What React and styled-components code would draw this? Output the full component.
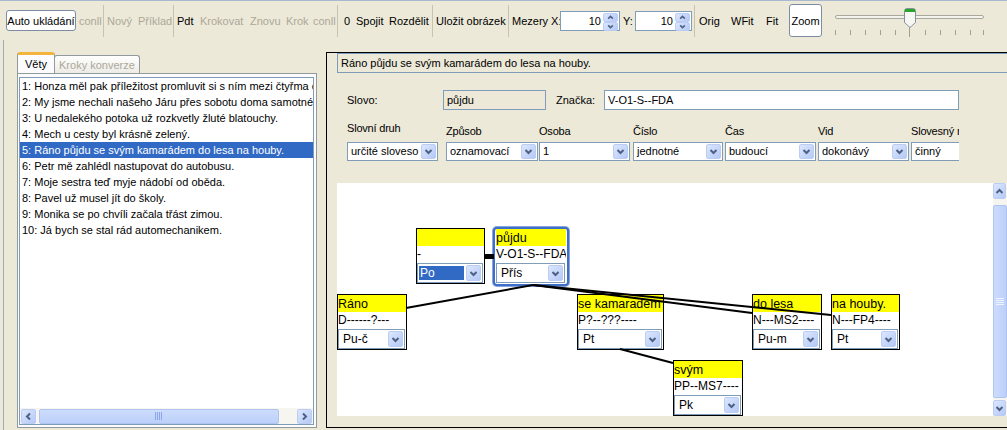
import React from "react";
import styled, { createGlobalStyle } from "styled-components";

const GlobalStyle = createGlobalStyle`
  html, body {
    margin: 0;
    padding: 0;
  }
  body {
    background: #ece9d8;
    font-family: "Liberation Sans", Arial, sans-serif;
    font-size: 11px;
    color: #000;
    overflow: hidden;
  }
`;

const Window = styled.div`
  width: 1007px;
  height: 430px;
  display: flex;
  flex-direction: column;
  overflow: hidden;
  border-top: 1px solid #a9b8cf;
  box-sizing: border-box;
`;

/* ---------- toolbar ---------- */

const Toolbar = styled.div`
  height: 39px;
  display: flex;
  align-items: center;
  flex-shrink: 0;
`;

const ToolLabel = styled.div`
  width: ${(p) => p.$w}px;
  margin-left: ${(p) => p.$ml}px;
  color: ${(p) => (p.$off ? "#aca899" : "#000")};
  white-space: nowrap;
  flex-shrink: 0;
`;

const ToolButton = styled.div`
  width: ${(p) => p.$w}px;
  height: ${(p) => p.$h}px;
  margin-left: ${(p) => p.$ml}px;
  box-sizing: border-box;
  border: 1px solid #7d8ca5;
  border-radius: 3px;
  background: #fff;
  display: flex;
  align-items: center;
  justify-content: center;
  flex-shrink: 0;
  white-space: nowrap;
`;

const Sep = styled.div`
  width: 1px;
  height: 32px;
  margin-left: ${(p) => p.$ml}px;
  background: #c7c3b0;
  flex-shrink: 0;
`;

const Spin = styled.div`
  width: ${(p) => p.$w}px;
  height: 20px;
  margin-left: ${(p) => p.$ml}px;
  box-sizing: border-box;
  border: 1px solid #7f9db9;
  background: #fff;
  display: flex;
  flex-shrink: 0;
`;

const SpinValue = styled.div`
  flex: 1;
  text-align: right;
  padding-right: 2px;
  line-height: 18px;
`;

const SpinButtons = styled.div`
  width: 15px;
  margin: 1px 1px 1px 0;
  display: flex;
  flex-direction: column;
`;

const XpBtn = styled.div`
  flex: ${(p) => (p.$fill ? 1 : "none")};
  width: ${(p) => (p.$w ? `${p.$w}px` : "auto")};
  height: ${(p) => (p.$h ? `${p.$h}px` : "auto")};
  box-sizing: border-box;
  background: linear-gradient(135deg, #dce7fe, #b5c9f6);
  border: 1px solid #bccdf5;
  border-radius: 2px;
  display: flex;
  align-items: center;
  justify-content: center;
  flex-shrink: 0;
`;

const SliderBox = styled.div`
  align-self: flex-start;
  margin-top: 7px;
  margin-left: ${(p) => p.$ml}px;
  height: 30px;
`;

/* ---------- main split ---------- */

const Main = styled.div`
  flex: 1;
  display: flex;
  min-height: 0;
`;

const LeftPane = styled.div`
  width: 315px;
  margin-left: 3px;
  margin-right: 8px;
  box-sizing: border-box;
  border-left: 1px solid #a3abb8;
  padding: 12px 0 0 13px;
  display: flex;
  flex-direction: column;
  flex-shrink: 0;
`;

const TabStrip = styled.div`
  height: 21px;
  display: flex;
  align-items: flex-end;
`;

const Tab = styled.div`
  height: ${(p) => (p.$active ? 21 : 18)}px;
  padding: 0 ${(p) => (p.$active ? 7 : 4)}px;
  box-sizing: border-box;
  border: 1px solid #919b9c;
  border-bottom: none;
  border-top: ${(p) => (p.$active ? "3px solid #f3b33d" : "1px solid #919b9c")};
  border-radius: 3px 3px 0 0;
  background: ${(p) => (p.$active ? "#fcfcfe" : "linear-gradient(#ffffff, #ecebe5)")};
  color: ${(p) => (p.$active ? "#000" : "#aca899")};
  display: flex;
  align-items: center;
  margin-left: ${(p) => (p.$active ? 0 : -1)}px;
`;

const TabPanel = styled.div`
  width: 300px;
  height: 355px;
  box-sizing: border-box;
  border: 1px solid #919b9c;
  background: #fcfcfe;
  padding: 3px 2px 2px 1px;
  display: flex;
`;

const ListBox = styled.div`
  flex: 1;
  border: 1px solid #7f9db9;
  background: #fff;
  display: flex;
  flex-direction: column;
  overflow: hidden;
`;

const ListRows = styled.div`
  flex: 1;
  overflow: hidden;
`;

const ListRow = styled.div`
  height: 16px;
  line-height: 16px;
  padding-left: 2px;
  white-space: nowrap;
  background: ${(p) => (p.$sel ? "#316ac5" : "transparent")};
  color: ${(p) => (p.$sel ? "#fff" : "#000")};
`;

const HScroll = styled.div`
  height: 16px;
  display: flex;
  align-items: center;
  background: #f6f5f0;
  padding: 0 1px;
  gap: 2px;
`;

const HThumb = styled.div`
  width: 240px;
  height: 15px;
  margin-left: 1px;
  box-sizing: border-box;
  border: 1px solid #b0c4f2;
  border-radius: 2px;
  background: linear-gradient(#cddcfc, #bcd0fa);
  display: flex;
  align-items: center;
  justify-content: center;
`;

const HTrack = styled.div`
  flex: 1;
`;

/* ---------- right pane ---------- */

const RightPane = styled.div`
  width: 681px;
  height: 376px;
  margin-top: 12px;
  box-sizing: border-box;
  border: 1px solid #000;
  border-right: none;
  padding-left: 10px;
  display: flex;
  flex-direction: column;
  overflow: hidden;
  flex-shrink: 0;
`;

const SentenceField = styled.div`
  height: 20px;
  margin-right: -5px;
  box-sizing: border-box;
  border: 1px solid #7f9db9;
  padding-left: 3px;
  line-height: 18px;
  white-space: nowrap;
  flex-shrink: 0;
`;

const FormArea = styled.div`
  width: 622px;
  padding-left: 10px;
  box-sizing: border-box;
  overflow: hidden;
  flex-shrink: 0;
`;

const FieldRow = styled.div`
  height: 20px;
  margin-top: 17px;
  display: flex;
  align-items: center;
`;

const FieldLabel = styled.div`
  width: ${(p) => p.$w}px;
  margin-left: ${(p) => p.$ml || 0}px;
  flex-shrink: 0;
`;

const TextField = styled.div`
  width: ${(p) => (p.$w ? `${p.$w}px` : "auto")};
  flex: ${(p) => (p.$w ? "none" : 1)};
  height: 20px;
  box-sizing: border-box;
  border: 1px solid #7f9db9;
  background: ${(p) => (p.$ro ? "#ece9d8" : "#fff")};
  padding-left: 3px;
  line-height: 18px;
`;

const ComboRow = styled.div`
  display: flex;
  margin-top: 15px;
`;

const ComboColumn = styled.div`
  width: ${(p) => p.$w}px;
  margin-left: ${(p) => p.$ml}px;
  flex-shrink: 0;
  display: flex;
  flex-direction: column;
`;

const ColumnLabel = styled.div`
  height: 13px;
  line-height: 13px;
  margin-top: ${(p) => (p.$raise ? -3 : 0)}px;
  margin-bottom: ${(p) => (p.$raise ? 7 : 4)}px;
  white-space: nowrap;
  letter-spacing: -0.2px;
`;

const Combo = styled.div`
  height: ${(p) => p.$h || 19}px;
  box-sizing: border-box;
  border: 1px solid #7f9db9;
  background: #fff;
  display: flex;
  align-items: stretch;
  padding: 1px;
`;

const ComboText = styled.div`
  flex: 1;
  padding-left: 2px;
  line-height: 15px;
  white-space: nowrap;
  overflow: hidden;
`;

/* ---------- diagram ---------- */

const Diagram = styled.div`
  height: 233px;
  margin-top: 22px;
  display: flex;
  flex-shrink: 0;
`;

const Canvas = styled.div`
  position: relative;
  flex: 1;
  background: #fff;
  overflow: hidden;
  font-family: "Liberation Sans", Arial, sans-serif;
  font-size: 12.5px;
`;

const VScroll = styled.div`
  width: 14px;
  background: #f6f5f0;
  border-left: 1px solid #fff;
  display: flex;
  flex-direction: column;
`;

const VThumb = styled.div`
  flex: 1;
  margin: 6px 0 2px;
  box-sizing: border-box;
  border: 1px solid #b0c4f2;
  border-radius: 2px;
  background: linear-gradient(90deg, #cddcfc, #bcd0fa);
  display: flex;
  align-items: center;
  justify-content: center;
`;

const NodeBox = styled.div`
  position: absolute;
  left: ${(p) => p.$x}px;
  top: ${(p) => p.$y}px;
  width: ${(p) => p.$w}px;
  box-sizing: border-box;
  background: #fff;
  border: ${(p) => (p.$active ? "2px solid #3f6fc6" : "1px solid #000")};
  border-radius: ${(p) => (p.$active ? 4 : 0)}px;
  box-shadow: ${(p) => (p.$active ? "0 0 0 1px #86a6df" : "none")};
  padding: ${(p) => (p.$active ? "0 1px 1px" : "0")};
  overflow: hidden;
`;

const NodeHead = styled.div`
  height: 17px;
  line-height: 18px;
  background: #ffff00;
  white-space: nowrap;
  overflow: hidden;
`;

const NodeTag = styled.div`
  height: 16px;
  line-height: 16px;
  font-size: 12px;
  white-space: nowrap;
  overflow: hidden;
`;

const NodeComboWrap = styled.div`
  padding: 1px 1px 0 0;
`;

const NodeValue = styled.div`
  flex: 1;
  margin: ${(p) => (p.$sel ? "1px 2px 1px 0" : "0")};
  padding-left: ${(p) => (p.$sel ? 1 : 3)}px;
  line-height: ${(p) => (p.$sel ? 14 : 16)}px;
  background: ${(p) => (p.$sel ? "#316ac5" : "transparent")};
  color: ${(p) => (p.$sel ? "#fff" : "#000")};
  font-size: 12px;
  white-space: nowrap;
`;

const Lines = styled.svg`
  position: absolute;
  left: 0;
  top: 0;
  pointer-events: none;
`;

/* ---------- bits ---------- */

const Chevron = ({ dir = "down", size = 9 }) => {
  const pts = {
    down: "1.5,3 4.5,6 7.5,3",
    up: "1.5,6 4.5,3 7.5,6",
    left: "6,1.5 3,4.5 6,7.5",
    right: "3,1.5 6,4.5 3,7.5",
  }[dir];
  return (
    <svg width={size} height={size} viewBox="0 0 9 9">
      <polyline points={pts} fill="none" stroke="#4d6185" strokeWidth="2" />
    </svg>
  );
};

const Slider = () => {
  const ticks = [1, 16, 31, 46, 61, 75, 91, 106, 121, 136, 149];
  return (
    <svg width="152" height="30" viewBox="0 0 152 30">
      <rect x="1.5" y="7.5" width="148" height="3" rx="1.5" fill="#f4f3ee" stroke="#a9a89f" />
      {ticks.map((t) => (
        <line
          key={t}
          x1={t + 0.5}
          x2={t + 0.5}
          y1={t === 75 ? 19 : 22}
          y2={t === 75 ? 29 : 27}
          stroke="#a1a192"
        />
      ))}
      <path
        d="M70.5,3 Q70.5,0.5 73,0.5 H79 Q81.5,0.5 81.5,3 V14.5 L76,19.5 L70.5,14.5 Z"
        fill="#f7f7f3"
        stroke="#8a8f9c"
      />
      <rect x="71" y="1" width="10" height="3" fill="#27a62b" />
    </svg>
  );
};

const Grip = ({ vertical }) => (
  <svg width={8} height={8} viewBox="0 0 8 8">
    {[0, 2, 4, 6].map((o) =>
      vertical ? (
        <line key={o} x1="0" x2="8" y1={o + 0.5} y2={o + 0.5} stroke="#eef3fe" />
      ) : (
        <line key={o} x1={o + 0.5} x2={o + 0.5} y1="0" y2="8" stroke="#8ba6e6" />
      )
    )}
  </svg>
);

const sentences = [
  "1: Honza měl pak příležitost promluvit si s ním mezi čtyřma očima.",
  "2: My jsme nechali našeho Járu přes sobotu doma samotného.",
  "3: U nedalekého potoka už rozkvetly žluté blatouchy.",
  "4: Mech u cesty byl krásně zelený.",
  "5: Ráno půjdu se svým kamarádem do lesa na houby.",
  "6: Petr mě zahlédl nastupovat do autobusu.",
  "7: Moje sestra teď myje nádobí od oběda.",
  "8: Pavel už musel jít do školy.",
  "9: Monika se po chvíli začala třást zimou.",
  "10: Já bych se stal rád automechanikem.",
];

const columns = [
  { label: "Slovní druh", value: "určité sloveso", w: 91, ml: 0, raise: true },
  { label: "Způsob", value: "oznamovací", w: 92, ml: 8 },
  { label: "Osoba", value: "1", w: 91, ml: 1 },
  { label: "Číslo", value: "jednotné", w: 90, ml: 3 },
  { label: "Čas", value: "budoucí", w: 91, ml: 2 },
  { label: "Vid", value: "dokonávý", w: 91, ml: 2 },
  { label: "Slovesný rod", value: "činný", w: 91, ml: 2 },
];

const nodes = [
  { x: 79, y: 45, w: 69, word: "", tag: "-", val: "Po", sel: true },
  { x: 156, y: 44, w: 76, word: "půjdu", tag: "V-O1-S--FDA", val: "Přís", active: true },
  { x: 0, y: 111, w: 70, word: "Ráno", tag: "D------?---", val: "Pu-č" },
  { x: 240, y: 111, w: 87, word: "se kamaradem", tag: "P?--???----", val: "Pt" },
  { x: 415, y: 111, w: 70, word: "do lesa", tag: "N---MS2----", val: "Pu-m" },
  { x: 494, y: 111, w: 69, word: "na houby.", tag: "N---FP4----", val: "Pt" },
  { x: 336, y: 177, w: 70, word: "svým", tag: "PP--MS7----", val: "Pk" },
];

const WordNode = ({ x, y, w, word, tag, val, sel, active }) => (
  <NodeBox $x={x} $y={y} $w={w} $active={active}>
    <NodeHead>{word}</NodeHead>
    <NodeTag>{tag}</NodeTag>
    <NodeComboWrap>
      <Combo $h={20}>
        <NodeValue $sel={sel}>{val}</NodeValue>
        <XpBtn $w={15}>
          <Chevron />
        </XpBtn>
      </Combo>
    </NodeComboWrap>
  </NodeBox>
);

export default function App() {
  return (
    <>
      <GlobalStyle />
      <Window>
        <Toolbar>
          <ToolButton $w={70} $h={21} $ml={6}>Auto ukládání</ToolButton>
          <ToolLabel $w={20} $ml={3} $off>conll</ToolLabel>
          <Sep $ml={4} />
          <ToolLabel $w={27} $ml={3} $off>Nový</ToolLabel>
          <ToolLabel $w={32} $ml={4} $off>Příklad</ToolLabel>
          <Sep $ml={3} />
          <ToolLabel $w={18} $ml={3}>Pdt</ToolLabel>
          <ToolLabel $w={46} $ml={5} $off>Krokovat</ToolLabel>
          <ToolLabel $w={29} $ml={4} $off>Znovu</ToolLabel>
          <ToolLabel $w={22} $ml={7} $off>Krok</ToolLabel>
          <ToolLabel $w={21} $ml={5} $off>conll</ToolLabel>
          <Sep $ml={3} />
          <ToolLabel $w={6} $ml={6}>0</ToolLabel>
          <ToolLabel $w={28} $ml={6}>Spojit</ToolLabel>
          <ToolLabel $w={39} $ml={5}>Rozdělit</ToolLabel>
          <Sep $ml={4} />
          <ToolLabel $w={68} $ml={3}>Uložit obrázek</ToolLabel>
          <Sep $ml={4} />
          <ToolLabel $w={47} $ml={3}>Mezery X:</ToolLabel>
          <Spin $w={60} $ml={1}>
            <SpinValue>10</SpinValue>
            <SpinButtons>
              <XpBtn $fill><Chevron dir="up" size={7} /></XpBtn>
              <XpBtn $fill><Chevron dir="down" size={7} /></XpBtn>
            </SpinButtons>
          </Spin>
          <ToolLabel $w={12} $ml={3}>Y:</ToolLabel>
          <Spin $w={57} $ml={0}>
            <SpinValue>10</SpinValue>
            <SpinButtons>
              <XpBtn $fill><Chevron dir="up" size={7} /></XpBtn>
              <XpBtn $fill><Chevron dir="down" size={7} /></XpBtn>
            </SpinButtons>
          </Spin>
          <Sep $ml={2} />
          <ToolLabel $w={20} $ml={4}>Orig</ToolLabel>
          <ToolLabel $w={23} $ml={12}>WFit</ToolLabel>
          <ToolLabel $w={13} $ml={12}>Fit</ToolLabel>
          <ToolButton $w={33} $h={33} $ml={10}>Zoom</ToolButton>
          <SliderBox $ml={12}>
            <Slider />
          </SliderBox>
        </Toolbar>

        <Main>
          <LeftPane>
            <TabStrip>
              <Tab $active>Věty</Tab>
              <Tab>Kroky konverze</Tab>
            </TabStrip>
            <TabPanel>
              <ListBox>
                <ListRows>
                  {sentences.map((s, i) => (
                    <ListRow key={i} $sel={i === 4}>{s}</ListRow>
                  ))}
                </ListRows>
                <HScroll>
                  <XpBtn $w={15} $h={15}><Chevron dir="left" /></XpBtn>
                  <HThumb><Grip /></HThumb>
                  <HTrack />
                  <XpBtn $w={15} $h={15}><Chevron dir="right" /></XpBtn>
                </HScroll>
              </ListBox>
            </TabPanel>
          </LeftPane>

          <RightPane>
            <SentenceField>Ráno půjdu se svým kamarádem do lesa na houby.</SentenceField>
            <FormArea>
              <FieldRow>
                <FieldLabel $w={96}>Slovo:</FieldLabel>
                <TextField $w={103} $ro>půjdu</TextField>
                <FieldLabel $w={48} $ml={10}>Značka:</FieldLabel>
                <TextField>V-O1-S--FDA</TextField>
              </FieldRow>
              <ComboRow>
                {columns.map((c) => (
                  <ComboColumn key={c.label} $w={c.w} $ml={c.ml}>
                    <ColumnLabel $raise={c.raise}>{c.label}</ColumnLabel>
                    <Combo>
                      <ComboText>{c.value}</ComboText>
                      <XpBtn $w={15}><Chevron /></XpBtn>
                    </Combo>
                  </ComboColumn>
                ))}
              </ComboRow>
            </FormArea>

            <Diagram>
              <Canvas>
                {nodes.map((n, i) => (
                  <WordNode key={i} {...n} />
                ))}
                <Lines width="656" height="233">
                  <g stroke="#000" strokeWidth="2" fill="none">
                    <line x1="196" y1="102" x2="69" y2="125" />
                    <line x1="196" y1="102" x2="415" y2="130" />
                    <line x1="196" y1="102" x2="494" y2="132" />
                    <line x1="283" y1="166" x2="336" y2="180" />
                  </g>
                  <rect x="147" y="71" width="10" height="5" fill="#000" />
                </Lines>
              </Canvas>
              <VScroll>
                <XpBtn $w={13} $h={16}><Chevron dir="up" /></XpBtn>
                <VThumb><Grip vertical /></VThumb>
                <XpBtn $w={13} $h={16}><Chevron dir="down" /></XpBtn>
              </VScroll>
            </Diagram>
          </RightPane>
        </Main>
      </Window>
    </>
  );
}
